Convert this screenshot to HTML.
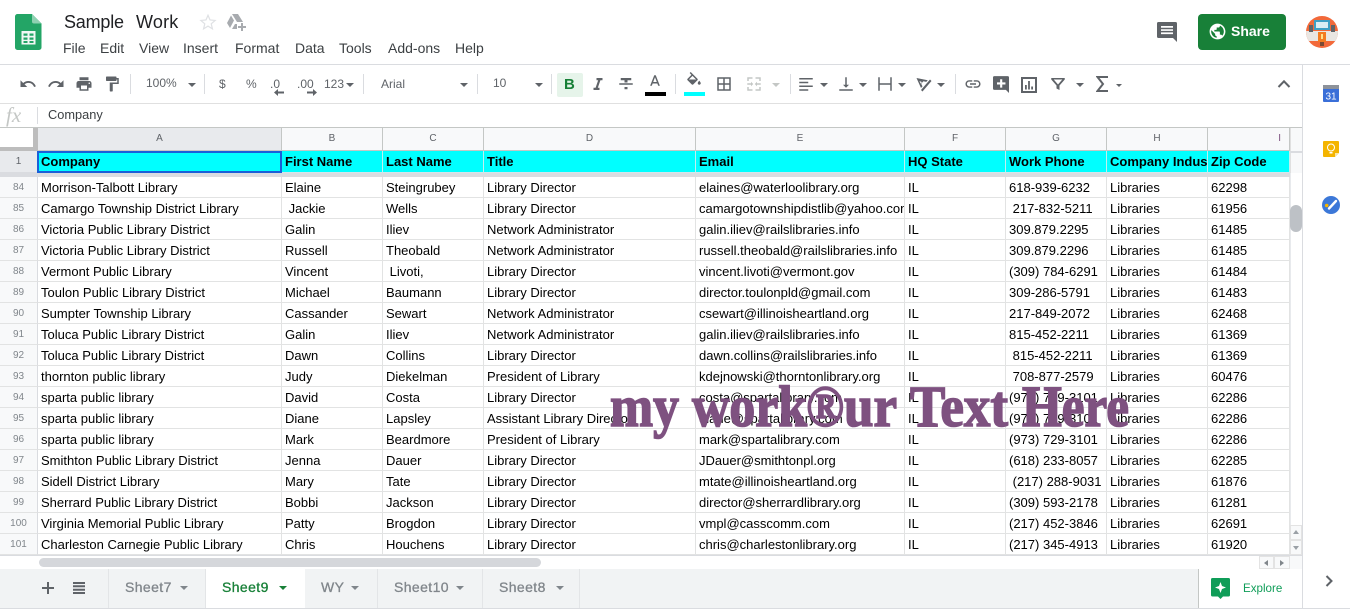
<!DOCTYPE html>
<html><head><meta charset="utf-8"><title>Sample Work</title>
<style>
html,body{margin:0;padding:0;background:#fff}
body{position:relative;width:1350px;height:613px;overflow:hidden;font-family:"Liberation Sans",Arial,sans-serif;color:#000}
.a{position:absolute;white-space:pre}
.m{top:40px;font-size:14px;line-height:17px;color:#3c4043}
.sep{position:absolute;top:74px;width:1px;height:20px;background:#dadce0}
.ic{position:absolute;fill:#5f6368}
.car{position:absolute;width:0;height:0;border-left:4px solid transparent;border-right:4px solid transparent;border-top:4px solid #5f6368}
.tb{position:absolute;font-size:12px;color:#5f6368;line-height:14px}
table{position:absolute;left:0;top:128px;width:1290px;table-layout:fixed;border-collapse:separate;border-spacing:0;background:#fff}
td{box-sizing:border-box;height:21px;padding:1px 0 0 3px;font-size:13px;line-height:19px;white-space:pre;overflow:hidden;border-right:1px solid #e2e3e3;border-bottom:1px solid #e2e3e3;color:#000}
td:first-child{padding:1px 0 0;text-align:center;background:#f8f9fa;color:#80868b;font-size:10px;line-height:19px;border-right:1px solid #dadce0}
tr.h td{height:23px;padding:0;text-align:center;background:#f8f9fa;color:#5f6368;font-size:10px;line-height:22px;border-color:#c4c7c5}
tr.h td.s{background:#e8eaed}
tr.h td:last-child{text-align:right;padding-right:8px;color:#7e5180}
tr.o td{height:22px;padding-top:1px;background:#0ff;font-weight:bold;border-bottom-color:#d5e5ea;border-right-color:#c2eeee;line-height:20px}
tr.o td:first-child{padding:1px 0 0;background:#e8eaed;color:#5f6368;font-weight:normal;line-height:20px;border-color:#dadce0}
tr.g td{height:4px;padding:0;background:#dadce0;border:0;line-height:4px;font-size:1px}
tr.g td:first-child{background:#dadce0;padding:0;line-height:4px;font-size:1px;border:0}
.tab{position:absolute;top:569px;height:39px;box-sizing:border-box;font-size:14px;line-height:37px;color:#80868b;-webkit-text-stroke:.3px #80868b;letter-spacing:.4px;border-right:1px solid #e3e5e7;padding-left:16px}
.tab i{position:absolute;top:17px;width:0;height:0;border-left:4px solid transparent;border-right:4px solid transparent;border-top:4px solid #80868b;-webkit-text-stroke:0}
</style></head><body>

<!-- logo -->
<svg class="a" style="left:15px;top:14px" width="27" height="36" viewBox="0 0 27 36"><path d="M2.500 0H17l9.500 9.500V33.500a2.500 2.500 0 0 1-2.500 2.500H2.500A2.500 2.500 0 0 1 0 33.500V2.500A2.500 2.500 0 0 1 2.500 0z" fill="#23a566"/><path d="M17 0l9.500 9.500H19a2 2 0 0 1-2-2z" fill="#8ed1b1"/><path d="M6.500 17h14v13.500h-14z" fill="#f1f8f4"/><path d="M8.500 19.500h4v2.300h-4zM14.500 19.500h4v2.300h-4zM8.500 23.500h4v2.300h-4zM14.500 23.500h4v2.300h-4zM8.500 27h4v2h-4zM14.500 27h4v2h-4z" fill="#23a566"/></svg>

<div class="a" style="left:64px;top:12px;font-size:18px;line-height:21px;color:#202124;letter-spacing:-.2px">Sample</div>
<div class="a" style="left:136px;top:12px;font-size:18px;line-height:21px;color:#202124;letter-spacing:.2px">Work</div>
<svg class="a" style="left:199px;top:13px" width="18" height="18" viewBox="0 0 24 24"><path d="M12 3l2.700 6.300 6.800.6-5.200 4.500 1.600 6.700L12 17.500l-5.900 3.600 1.600-6.700L2.500 9.900l6.800-.6z" fill="none" stroke="#dfe1e4" stroke-width="1.600"/></svg>
<svg class="a" style="left:226px;top:13px" width="20" height="18" viewBox="0 0 20 18"><path d="M6 1h6l5 8h-6zM5 2.500L8 7.500 4 15 1 10zM6 16l3-5h2v5z" fill="#a8abaf"/><path d="M15 10h2v3h3v2h-3v3h-2v-3h-3v-2h3z" fill="#a8abaf"/></svg>

<span class="a m" style="left:63px">File</span>
<span class="a m" style="left:100px">Edit</span>
<span class="a m" style="left:139px">View</span>
<span class="a m" style="left:183px">Insert</span>
<span class="a m" style="left:235px">Format</span>
<span class="a m" style="left:295px">Data</span>
<span class="a m" style="left:339px">Tools</span>
<span class="a m" style="left:388px">Add-ons</span>
<span class="a m" style="left:455px">Help</span>

<!-- comments -->
<svg class="a" style="left:1156px;top:21px" width="22" height="22" viewBox="0 0 22 22"><path d="M2.500 1h17A1.500 1.500 0 0 1 21 2.500V21l-4-4H2.500A1.500 1.500 0 0 1 1 15.500V2.500A1.500 1.500 0 0 1 2.500 1z" fill="#5f6368"/><path d="M5 5h12v1.700H5zM5 8.200h12v1.700H5zM5 11.400h12v1.700H5z" fill="#fff"/></svg>
<!-- share -->
<div class="a" style="left:1198px;top:14px;width:88px;height:36px;background:#188038;border-radius:4px"></div>
<svg class="a" style="left:1208px;top:22px" width="19" height="19" viewBox="0 0 24 24"><path fill="#fff" d="M12 2C6.480 2 2 6.480 2 12s4.480 10 10 10 10-4.480 10-10S17.520 2 12 2zm-1 17.930c-3.950-.49-7-3.850-7-7.930 0-.62.080-1.210.21-1.790L9 15v1c0 1.100.9 2 2 2v1.930zm6.900-2.540c-.26-.81-1-1.390-1.900-1.390h-1v-3c0-.55-.45-1-1-1H8v-2h2c.55 0 1-.45 1-1V7h2c1.100 0 2-.9 2-2v-.41c2.930 1.190 5 4.060 5 7.410 0 2.080-.8 3.970-2.100 5.390z"/></svg>
<div class="a" style="left:1231px;top:23px;font-size:14px;line-height:17px;color:#fff;font-weight:bold">Share</div>
<!-- avatar -->
<svg class="a" style="left:1306px;top:16px" width="32" height="32" viewBox="0 0 32 32"><defs><clipPath id="c"><circle cx="16" cy="16" r="16"/></clipPath></defs><g clip-path="url(#c)"><rect width="32" height="32" fill="#f2693a"/><rect x="8" y="4" width="16" height="10" fill="#3d9fc4"/><rect x="10" y="6" width="12" height="6" fill="#d9edf3"/><rect x="0" y="15" width="32" height="10" fill="#e9e6e2"/><rect x="3" y="9" width="4" height="7" fill="#5f6368"/><rect x="25" y="9" width="4" height="7" fill="#5f6368"/><rect x="12" y="16" width="8" height="10" fill="#f47b20"/><rect x="15" y="18" width="2" height="5" fill="#ffe08a"/><rect x="14" y="26" width="4" height="4" fill="#7a4a33"/></g></svg>

<!-- chrome lines -->
<div class="a" style="left:0;top:64px;width:1350px;height:1px;background:#dadce0"></div>
<div class="a" style="left:0;top:103px;width:1302px;height:1px;background:#e0e0e0"></div>
<div class="a" style="left:0;top:127px;width:1302px;height:1px;background:#c4c7c5"></div>
<div class="a" style="left:1302px;top:64px;width:1px;height:544px;background:#dadce0"></div>
<div class="a" style="left:0;top:608px;width:1350px;height:1px;background:#dadce0"></div>

<!-- toolbar -->
<svg class="ic" style="left:19px;top:75px" width="18" height="18" viewBox="0 0 24 24"><path d="M12.500 8c-2.650 0-5.050.99-6.900 2.600L2 7v9h9l-3.620-3.620c1.390-1.160 3.160-1.880 5.120-1.880 3.540 0 6.550 2.310 7.600 5.500l2.370-.78C21.080 11.030 17.150 8 12.500 8z"/></svg>
<svg class="ic" style="left:47px;top:75px" width="18" height="18" viewBox="0 0 24 24"><path d="M18.400 10.600C16.550 8.990 14.150 8 11.500 8c-4.650 0-8.580 3.030-9.960 7.220L3.900 16c1.050-3.190 4.050-5.500 7.600-5.500 1.950 0 3.730.72 5.120 1.880L13 16h9V7l-3.600 3.600z"/></svg>
<svg class="ic" style="left:75px;top:75px" width="18" height="18" viewBox="0 0 24 24"><path d="M19 8H5c-1.660 0-3 1.340-3 3v6h4v4h12v-4h4v-6c0-1.660-1.340-3-3-3zm-3 11H8v-5h8v5zm3-7c-.55 0-1-.45-1-1s.45-1 1-1 1 .45 1 1-.45 1-1 1zm-1-9H6v4h12V3z"/></svg>
<svg class="ic" style="left:103px;top:75px" width="18" height="18" viewBox="0 0 24 24"><path d="M18 4V3c0-.55-.45-1-1-1H5c-.55 0-1 .45-1 1v4c0 .55.45 1 1 1h12c.55 0 1-.45 1-1V6h1v4H9v11c0 .55.45 1 1 1h2c.55 0 1-.45 1-1v-9h8V4h-3z"/></svg>
<div class="sep" style="left:130px"></div>
<div class="tb" style="left:146px;top:76px">100%</div><div class="car" style="left:188px;top:83px"></div>
<div class="sep" style="left:204px"></div>
<div class="tb" style="left:219px;top:77px">$</div>
<div class="tb" style="left:246px;top:77px">%</div>
<div class="tb" style="left:270px;top:77px">.0</div>
<svg class="ic" style="left:274px;top:89px" width="10" height="7" viewBox="0 0 10 7"><path d="M4 0L0 3.500 4 7V4.500h6v-2H4z"/></svg>
<div class="tb" style="left:297px;top:77px">.00</div>
<svg class="ic" style="left:307px;top:89px" width="10" height="7" viewBox="0 0 10 7"><path d="M6 0l4 3.500L6 7V4.500H0v-2h6z"/></svg>
<div class="tb" style="left:324px;top:77px">123</div><div class="car" style="left:346px;top:83px"></div>
<div class="sep" style="left:363px"></div>
<div class="tb" style="left:381px;top:77px">Arial</div><div class="car" style="left:460px;top:83px"></div>
<div class="sep" style="left:477px"></div>
<div class="tb" style="left:493px;top:76px">10</div><div class="car" style="left:535px;top:83px"></div>
<div class="sep" style="left:551px"></div>
<div class="a" style="left:557px;top:73px;width:26px;height:24px;background:#e6f4ea;border-radius:2px"></div>
<div class="a" style="left:564px;top:76px;font-size:15px;line-height:18px;font-weight:bold;color:#188038">B</div>
<svg class="ic" style="left:589px;top:75px" width="18" height="18" viewBox="0 0 24 24"><path d="M10 4v3h2.210l-3.420 10H6v3h8v-3h-2.210l3.420-10H18V4z"/></svg>
<svg class="ic" style="left:617px;top:75px" width="18" height="18" viewBox="0 0 24 24"><path d="M3 13h18v-2H3zM10 19h4v-3h-4zM5 4v3h5v3h4V7h5V4z"/></svg>
<svg class="ic" style="left:646px;top:73px" width="18" height="18" viewBox="0 0 24 24"><path d="M11 3L5.500 17h2.250l1.120-3h6.250l1.120 3h2.250L13 3zm-1.380 9L12 5.670 14.380 12z"/></svg>
<div class="a" style="left:645px;top:92px;width:21px;height:4px;background:#000"></div>
<div class="sep" style="left:675px"></div>
<svg class="ic" style="left:685px;top:72px" width="18" height="18" viewBox="0 0 24 24"><path d="M16.560 8.940L7.620 0 6.210 1.410l2.380 2.380-5.150 5.150c-.59.59-.59 1.540 0 2.120l5.500 5.500c.29.29.68.44 1.060.44s.77-.15 1.060-.44l5.500-5.500c.59-.58.59-1.530 0-2.120zM5.210 10L10 5.210 14.790 10H5.210zM19 11.500s-2 2.170-2 3.500c0 1.100.9 2 2 2s2-.9 2-2c0-1.330-2-3.500-2-3.500z"/></svg>
<div class="a" style="left:684px;top:92px;width:21px;height:4px;background:#0ff"></div>
<svg class="ic" style="left:715px;top:75px" width="18" height="18" viewBox="0 0 24 24"><path d="M3 3v18h18V3H3zm8 16H5v-6h6v6zm0-8H5V5h6v6zm8 8h-6v-6h6v6zm0-8h-6V5h6v6z"/></svg>
<svg class="ic" style="left:745px;top:75px;fill:#c4c7c5" width="18" height="18" viewBox="0 0 24 24"><path d="M3 3h7v2H5v3H3zM14 3h7v5h-2V5h-5zM3 16h2v3h5v2H3zM19 16h2v5h-7v-2h5zM3 11h5V9l3 3-3 3v-2H3zM21 11h-5V9l-3 3 3 3v-2h5z"/></svg>
<div class="car" style="left:772px;top:83px;border-top-color:#c4c7c5"></div>
<div class="sep" style="left:790px"></div>
<svg class="ic" style="left:797px;top:75px" width="18" height="18" viewBox="0 0 24 24"><path d="M3 3h18v2H3zM3 8h12v2H3zM3 13h18v2H3zM3 18h12v2H3z" transform="translate(0 1)"/></svg>
<div class="car" style="left:820px;top:83px"></div>
<svg class="ic" style="left:837px;top:75px" width="18" height="18" viewBox="0 0 24 24"><path d="M11 3h2v10h3l-4 4-4-4h3zM3 19h18v2H3z"/></svg>
<div class="car" style="left:859px;top:83px"></div>
<svg class="ic" style="left:876px;top:75px" width="18" height="18" viewBox="0 0 24 24"><path d="M3 3h2v18H3zM19 3h2v18h-2zM5 11h14v2H5z"/></svg>
<div class="car" style="left:898px;top:83px"></div>
<svg class="ic" style="left:915px;top:75px" width="18" height="18" viewBox="0 0 24 24"><path d="M2 4l15 3-2 2.200-3.800-.9-3 3.300 1.800 3.500-2 2.200zM6 8l1.500 3.500L9.300 9.500zM20 6l2 2L10 22l-2-2z"/></svg>
<div class="car" style="left:937px;top:83px"></div>
<div class="sep" style="left:955px"></div>
<svg class="ic" style="left:964px;top:75px" width="18" height="18" viewBox="0 0 24 24"><path d="M3.900 12c0-1.710 1.390-3.100 3.100-3.100h4V7H7c-2.760 0-5 2.240-5 5s2.240 5 5 5h4v-1.900H7c-1.710 0-3.100-1.390-3.100-3.100zM8 13h8v-2H8v2zm9-6h-4v1.900h4c1.710 0 3.100 1.390 3.100 3.100s-1.390 3.100-3.100 3.100h-4V17h4c2.760 0 5-2.240 5-5s-2.240-5-5-5z"/></svg>
<svg class="ic" style="left:993px;top:76px" width="16" height="18" viewBox="0 0 18 20"><path d="M1.500 0h15A1.500 1.500 0 0 1 18 1.500V19l-3.500-3.500h-13A1.500 1.500 0 0 1 0 14V1.500A1.500 1.500 0 0 1 1.500 0z"/><path d="M8 3.500h2.400V7H14v2.400h-3.600V13H8V9.400H4.500V7H8z" fill="#fff"/></svg>
<svg class="ic" style="left:1021px;top:76px" width="16" height="18" viewBox="0 0 16 18"><path d="M0 1h16v16H0zM2 3v12h12V3z"/><path d="M4 9h1.800v4.500H4zM7.100 5h1.800v8.500H7.100zM10.200 10.500H12v3h-1.800z"/></svg>
<svg class="ic" style="left:1049px;top:75px" width="18" height="18" viewBox="0 0 24 24"><path d="M3 4h18v2l-7 8v6l-4-2v-4L3 6zm3.300 2l5.700 6.600L17.700 6z"/></svg>
<div class="car" style="left:1076px;top:83px"></div>
<svg class="a" style="left:1096px;top:76px" width="13" height="16" viewBox="0 0 13 16"><path d="M12 1H1.500l5.500 7-5.500 7H12" fill="none" stroke="#5f6368" stroke-width="2"/></svg>
<div class="car" style="left:1116px;top:84px;border-left-width:3px;border-right-width:3px;border-top-width:3px"></div>
<svg class="a" style="left:1277px;top:79px" width="14" height="9" viewBox="0 0 14 9"><path d="M1.500 8L7 2.300 12.500 8" fill="none" stroke="#5f6368" stroke-width="2"/></svg>

<!-- formula bar -->
<div class="a" style="left:6px;top:104px;font-family:'Liberation Serif',serif;font-style:italic;font-size:21px;line-height:22px;color:#c4c7c5">fx</div>
<div class="a" style="left:37px;top:107px;width:1px;height:17px;background:#dadce0"></div>
<div class="a" style="left:48px;top:107px;font-size:12.800px;line-height:15px;color:#3c4043">Company</div>

<!-- grid -->
<table><colgroup><col style="width:38px"><col style="width:244px"><col style="width:101px"><col style="width:101px"><col style="width:212px"><col style="width:209px"><col style="width:101px"><col style="width:101px"><col style="width:101px"><col style="width:82px"></colgroup>
<tr class="h"><td></td><td class="s">A</td><td>B</td><td>C</td><td>D</td><td>E</td><td>F</td><td>G</td><td>H</td><td>I</td></tr>
<tr class="o"><td>1</td><td>Company</td><td>First Name</td><td>Last Name</td><td>Title</td><td>Email</td><td>HQ State</td><td>Work Phone</td><td>Company Industry</td><td>Zip Code</td></tr>
<tr class="g"><td></td><td></td><td></td><td></td><td></td><td></td><td></td><td></td><td></td><td></td></tr>
<tr><td>84</td><td>Morrison-Talbott Library</td><td>Elaine</td><td>Steingrubey</td><td>Library Director</td><td>elaines@waterloolibrary.org</td><td>IL</td><td>618-939-6232</td><td>Libraries</td><td>62298</td></tr>
<tr><td>85</td><td>Camargo Township District Library</td><td> Jackie</td><td>Wells</td><td>Library Director</td><td>camargotownshipdistlib@yahoo.com</td><td>IL</td><td> 217-832-5211</td><td>Libraries</td><td>61956</td></tr>
<tr><td>86</td><td>Victoria Public Library District</td><td>Galin</td><td>Iliev</td><td>Network Administrator</td><td>galin.iliev@railslibraries.info</td><td>IL</td><td>309.879.2295</td><td>Libraries</td><td>61485</td></tr>
<tr><td>87</td><td>Victoria Public Library District</td><td>Russell</td><td>Theobald</td><td>Network Administrator</td><td>russell.theobald@railslibraries.info</td><td>IL</td><td>309.879.2296</td><td>Libraries</td><td>61485</td></tr>
<tr><td>88</td><td>Vermont Public Library</td><td>Vincent</td><td> Livoti,</td><td>Library Director</td><td>vincent.livoti@vermont.gov</td><td>IL</td><td>(309) 784-6291</td><td>Libraries</td><td>61484</td></tr>
<tr><td>89</td><td>Toulon Public Library District</td><td>Michael</td><td>Baumann</td><td>Library Director</td><td>director.toulonpld@gmail.com</td><td>IL</td><td>309-286-5791</td><td>Libraries</td><td>61483</td></tr>
<tr><td>90</td><td>Sumpter Township Library</td><td>Cassander</td><td>Sewart</td><td>Network Administrator</td><td>csewart@illinoisheartland.org</td><td>IL</td><td>217-849-2072</td><td>Libraries</td><td>62468</td></tr>
<tr><td>91</td><td>Toluca Public Library District</td><td>Galin</td><td>Iliev</td><td>Network Administrator</td><td>galin.iliev@railslibraries.info</td><td>IL</td><td>815-452-2211</td><td>Libraries</td><td>61369</td></tr>
<tr><td>92</td><td>Toluca Public Library District</td><td>Dawn</td><td>Collins</td><td>Library Director</td><td>dawn.collins@railslibraries.info</td><td>IL</td><td> 815-452-2211</td><td>Libraries</td><td>61369</td></tr>
<tr><td>93</td><td>thornton public library</td><td>Judy</td><td>Diekelman</td><td>President of Library</td><td>kdejnowski@thorntonlibrary.org</td><td>IL</td><td> 708-877-2579</td><td>Libraries</td><td>60476</td></tr>
<tr><td>94</td><td>sparta public library</td><td>David</td><td>Costa</td><td>Library Director</td><td>costa@spartalibrary.com</td><td>IL</td><td>(973) 729-3101</td><td>Libraries</td><td>62286</td></tr>
<tr><td>95</td><td>sparta public library</td><td>Diane</td><td>Lapsley</td><td>Assistant Library Director</td><td>diane@spartalibrary.com</td><td>IL</td><td>(973) 729-3101</td><td>Libraries</td><td>62286</td></tr>
<tr><td>96</td><td>sparta public library</td><td>Mark</td><td>Beardmore</td><td>President of Library</td><td>mark@spartalibrary.com</td><td>IL</td><td>(973) 729-3101</td><td>Libraries</td><td>62286</td></tr>
<tr><td>97</td><td>Smithton Public Library District</td><td>Jenna</td><td>Dauer</td><td>Library Director</td><td>JDauer@smithtonpl.org</td><td>IL</td><td>(618) 233-8057</td><td>Libraries</td><td>62285</td></tr>
<tr><td>98</td><td>Sidell District Library</td><td>Mary</td><td>Tate</td><td>Library Director</td><td>mtate@illinoisheartland.org</td><td>IL</td><td> (217) 288-9031</td><td>Libraries</td><td>61876</td></tr>
<tr><td>99</td><td>Sherrard Public Library District</td><td>Bobbi</td><td>Jackson</td><td>Library Director</td><td>director@sherrardlibrary.org</td><td>IL</td><td>(309) 593-2178</td><td>Libraries</td><td>61281</td></tr>
<tr><td>100</td><td>Virginia Memorial Public Library</td><td>Patty</td><td>Brogdon</td><td>Library Director</td><td>vmpl@casscomm.com</td><td>IL</td><td>(217) 452-3846</td><td>Libraries</td><td>62691</td></tr>
<tr><td>101</td><td>Charleston Carnegie Public Library</td><td>Chris</td><td>Houchens</td><td>Library Director</td><td>chris@charlestonlibrary.org</td><td>IL</td><td>(217) 345-4913</td><td>Libraries</td><td>61920</td></tr>
</table>

<!-- corner -->
<div class="a" style="left:0;top:128px;width:33px;height:19px;background:#fff"></div>
<div class="a" style="left:33px;top:128px;width:5px;height:23px;background:#bdbdbd"></div>
<div class="a" style="left:0;top:147px;width:38px;height:4px;background:#bdbdbd"></div>
<!-- selection -->
<div class="a" style="left:37px;top:151px;width:245px;height:22px;box-sizing:border-box;border:2px solid #1a5fd8"></div>

<!-- vertical scroll -->
<div class="a" style="left:1290px;top:128px;width:12px;height:441px;background:#fff;border-left:1px solid #e8eaed;box-sizing:border-box"></div>
<div class="a" style="left:1290px;top:128px;width:12px;height:45px;background:#f8f9fa;border-left:1px solid #e0e0e0;box-sizing:border-box"></div>
<div class="a" style="left:1290px;top:151px;width:12px;height:2px;background:#dadce0"></div>
<div class="a" style="left:1290px;top:205px;width:12px;height:27px;background:#bdc1c6;border-radius:6px"></div>
<div class="a" style="left:1290px;top:525px;width:12px;height:15px;background:#f8f9fa;border:1px solid #e3e3e3;box-sizing:border-box"></div>
<div class="a" style="left:1290px;top:540px;width:12px;height:15px;background:#f8f9fa;border:1px solid #e3e3e3;box-sizing:border-box"></div>
<div class="a" style="left:1293px;top:530px;width:0;height:0;border-left:3px solid transparent;border-right:3px solid transparent;border-bottom:4px solid #9aa0a6"></div>
<div class="a" style="left:1293px;top:546px;width:0;height:0;border-left:3px solid transparent;border-right:3px solid transparent;border-top:4px solid #9aa0a6"></div>

<!-- horizontal scroll -->
<div class="a" style="left:0;top:555px;width:1302px;height:14px;background:#fff;border-top:1px solid #dadce0;box-sizing:border-box"></div>
<div class="a" style="left:39px;top:558px;width:502px;height:9px;background:#d5d7db;border-radius:5px"></div>
<div class="a" style="left:1259px;top:556px;width:15px;height:13px;background:#f8f9fa;border:1px solid #e3e3e3;box-sizing:border-box"></div>
<div class="a" style="left:1274px;top:556px;width:16px;height:13px;background:#f8f9fa;border:1px solid #e3e3e3;box-sizing:border-box"></div>
<div class="a" style="left:1290px;top:556px;width:12px;height:13px;background:#f8f9fa"></div>
<div class="a" style="left:1264px;top:560px;width:0;height:0;border-top:3px solid transparent;border-bottom:3px solid transparent;border-right:4px solid #80868b"></div>
<div class="a" style="left:1280px;top:560px;width:0;height:0;border-top:3px solid transparent;border-bottom:3px solid transparent;border-left:4px solid #80868b"></div>

<!-- tabs -->
<div class="a" style="left:0;top:569px;width:1199px;height:39px;background:#f1f3f4"></div>
<svg class="a" style="left:42px;top:582px" width="12" height="12" viewBox="0 0 12 12"><path d="M5 0h2v5h5v2H7v5H5V7H0V5h5z" fill="#5f6368"/></svg>
<svg class="a" style="left:73px;top:582px" width="12" height="12" viewBox="0 0 12 12"><path d="M0 0h12v2H0zM0 3.300h12v2H0zM0 6.700h12v2H0zM0 10h12v2H0z" fill="#5f6368"/></svg>
<div class="tab" style="left:108px;width:98px;border-left:1px solid #e3e5e7">Sheet7<i style="left:71px"></i></div>
<div class="tab" style="left:206px;width:99px;background:#fff;color:#188038;-webkit-text-stroke:.3px #188038;border:0">Sheet9<i style="left:73px;border-top-color:#188038"></i></div>
<div class="tab" style="left:305px;width:73px">WY<i style="left:46px"></i></div>
<div class="tab" style="left:378px;width:105px">Sheet10<i style="left:78px"></i></div>
<div class="tab" style="left:483px;width:97px">Sheet8<i style="left:73px"></i></div>

<!-- explore -->
<div class="a" style="left:1198px;top:569px;width:104px;height:39px;background:#fff;border-left:1px solid #c4c7c5;box-sizing:border-box"></div>
<svg class="a" style="left:1211px;top:578px" width="19" height="21" viewBox="0 0 19 21"><path d="M1.500 0h16A1.500 1.500 0 0 1 19 1.500V17a1.500 1.500 0 0 1-1.500 1.500H12L9.500 21 7 18.500H1.500A1.500 1.500 0 0 1 0 17V1.500A1.500 1.500 0 0 1 1.500 0z" fill="#0f9d58"/><path d="M9.500 4l1.500 4 4 1.500-4 1.500-1.500 4L8 11 4 9.500 8 8z" fill="#fff"/></svg>
<div class="a" style="left:1243px;top:581px;font-size:11.600px;line-height:15px;color:#0f9d58">Explore</div>
<svg class="a" style="left:1325px;top:575px" width="9" height="12" viewBox="0 0 9 12"><path d="M1.500 1l5 5-5 5" fill="none" stroke="#5f6368" stroke-width="2"/></svg>

<!-- side panel -->
<svg class="a" style="left:1323px;top:85px" width="16" height="17" viewBox="0 0 16 17"><rect width="16" height="17" fill="#3a6fd8" rx="1"/><rect width="16" height="4" fill="#8d929a"/><text x="8" y="14.500" text-anchor="middle" font-size="10" fill="#fff" font-family="Liberation Sans">31</text></svg>
<svg class="a" style="left:1323px;top:141px" width="16" height="16" viewBox="0 0 16 16"><path d="M1 0h14a1 1 0 0 1 1 1v11l-4 4H1a1 1 0 0 1-1-1V1a1 1 0 0 1 1-1z" fill="#f4b400"/><path d="M16 12h-4v4z" fill="#f8e6a8"/><circle cx="8" cy="6.500" r="3.500" fill="none" stroke="#fff" stroke-width="1"/><path d="M6.500 11h3v1.500h-3z" fill="#fff"/></svg>
<svg class="a" style="left:1322px;top:196px" width="18" height="18" viewBox="0 0 18 18"><circle cx="9" cy="9" r="9" fill="#3c78d8"/><path d="M7 12.500L14 5" stroke="#fff" stroke-width="2.400" stroke-linecap="round"/><circle cx="4.700" cy="9.500" r="1.800" fill="#f4b400"/></svg>

<!-- watermark -->
<svg class="a" style="left:0;top:0;pointer-events:none" width="1350" height="613"><g font-family="'Liberation Serif',serif" font-weight="bold" font-size="58" fill="#7e5180" stroke="#7e5180" stroke-width="1.600"><text x="610" y="426" textLength="69" lengthAdjust="spacingAndGlyphs">my</text><text x="692" y="426" textLength="115" lengthAdjust="spacingAndGlyphs">work</text><text x="806" y="426" textLength="38" lengthAdjust="spacingAndGlyphs">®</text><text x="844" y="426" textLength="53" lengthAdjust="spacingAndGlyphs">ur</text><text x="910" y="426" textLength="98" lengthAdjust="spacingAndGlyphs">Text</text><text x="1022" y="426" textLength="107" lengthAdjust="spacingAndGlyphs">Here</text></g></svg>

</body></html>
